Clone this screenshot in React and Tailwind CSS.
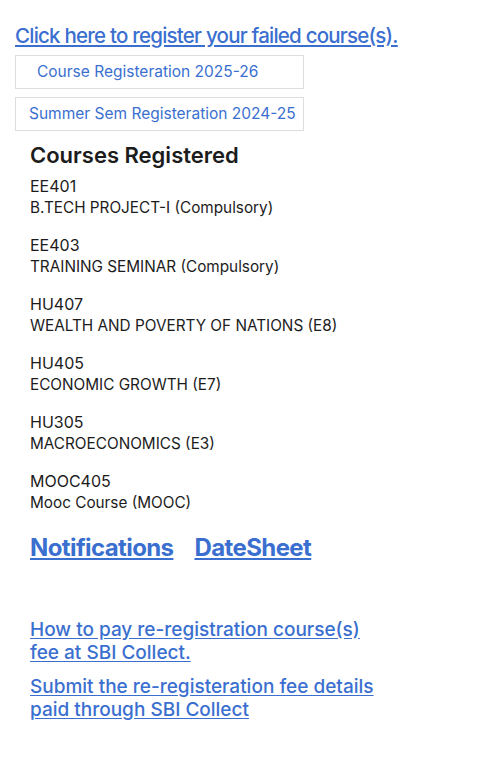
export default function App() {
  const courses = [
    ["EE401", "B.TECH PROJECT-I (Compulsory)"],
    ["EE403", "TRAINING SEMINAR (Compulsory)"],
    ["HU407", "WEALTH AND POVERTY OF NATIONS (E8)"],
    ["HU405", "ECONOMIC GROWTH (E7)"],
    ["HU305", "MACROECONOMICS (E3)"],
    ["MOOC405", "Mooc Course (MOOC)"],
  ];
  return (
    <div className="min-h-[770px] bg-white px-[15px] pt-[24px] font-['Inter',sans-serif] text-[#1c1c1c]">
      <a href="#" className="block text-[20.5px] leading-[24px] font-medium tracking-[-0.78px] text-[#3a6fd0] underline underline-offset-2">
        Click here to register your failed course(s).
      </a>
      <div className="mt-[7px] flex h-[34px] w-[289px] items-center whitespace-nowrap border border-[#dddddd] pl-[21px] text-[15.5px] text-[#3a6fd0]">
        Course Registeration 2025-26
      </div>
      <div className="mt-[8px] flex h-[34px] w-[289px] items-center whitespace-nowrap border border-[#dddddd] pl-[13px] text-[15.5px] text-[#3a6fd0]">
        Summer Sem Registeration 2024-25
      </div>
      <div className="px-[15px]">
        <h2 className="mt-[10px] text-[22px] leading-[28px] font-semibold">Courses Registered</h2>
        <div className="mt-[6px] flex flex-col gap-[15px]">
          {courses.map(([code, name]) => (
            <div key={code} className="text-[15.3px] leading-[22px]">
              <div className="text-[16px]">{code}</div>
              <div>{name}</div>
            </div>
          ))}
        </div>
        <div className="mt-[20px] flex gap-[21px] text-[24px] leading-[28px] font-bold tracking-[-0.6px] text-[#3a6fd0]">
          <a href="#" className="underline underline-offset-2">Notifications</a>
          <a href="#" className="underline underline-offset-2">DateSheet</a>
        </div>
        <a href="#" className="mt-[56px] block text-[19px] leading-[23px] font-medium text-[#3a6fd0] underline underline-offset-2">
          How to pay re-registration course(s)<br />fee at SBI Collect.
        </a>
        <a href="#" className="mt-[11px] block text-[19px] leading-[23px] font-medium text-[#3a6fd0] underline underline-offset-2">
          Submit the re-registeration fee details<br />paid through SBI Collect
        </a>
      </div>
    </div>
  );
}
